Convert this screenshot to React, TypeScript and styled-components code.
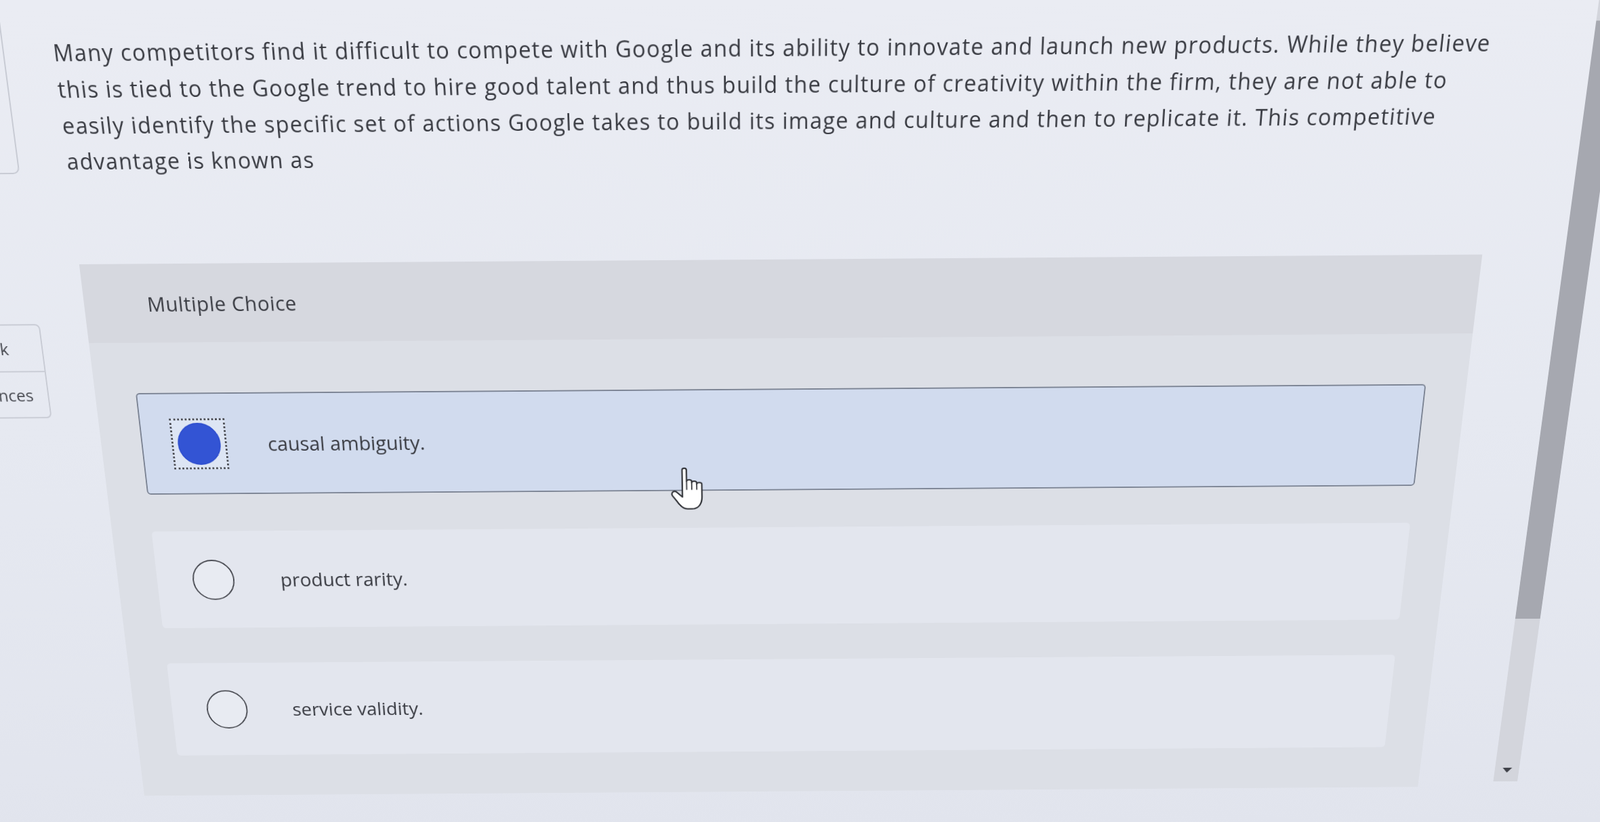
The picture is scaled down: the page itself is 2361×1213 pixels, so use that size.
import React from "react";
import styled, { createGlobalStyle } from "styled-components";

/* The reference is a photo of a screen taken at a slight angle:
   the whole page is laid out flat and then given one projective
   transform (perspective + small tilt) so it matches the photo. */
const G = 0.00012;
const E = 1.065;
const RAIL = 250;
const CX = 1100 + RAIL;

const GlobalStyle = createGlobalStyle`
  html, body {
    margin: 0;
    padding: 0;
    overflow: hidden;
    background: #eaecf3;
  }
  body {
    font-family: "Open Sans", "Liberation Sans", Arial, sans-serif;
    color: #383a41;
  }
`;

const Viewport = styled.div`
  width: 2361px;
  height: 1213px;
  overflow: hidden;
  background: #eaecf3;
`;

const Stage = styled.div`
  display: flex;
  align-items: flex-start;
  width: 2900px;
  height: 1360px;
  margin-left: -${RAIL}px;
  transform-origin: 0 0;
  transform: translate(${CX}px, 600px) rotate(-0.4deg) translate(-${CX}px, -600px)
    matrix3d(1, 0, 0, 0, ${CX * G}, ${E}, 0, ${G}, 0, 0, 1, 0, 0, 0, 0, 1);
  background: linear-gradient(180deg, #eaecf3 0%, #e6e9f1 45%, #e1e4ed 100%);
`;

const Rail = styled.aside`
  flex: 0 0 ${RAIL + 1}px;
  display: flex;
  flex-direction: column;
  align-items: flex-end;
`;

const NumberCard = styled.div`
  box-sizing: border-box;
  margin-top: 10px;
  width: 184px;
  height: 231px;
  border: 2px solid #c8cbd4;
  border-radius: 10px;
`;

const ToolCard = styled.div`
  box-sizing: border-box;
  margin-top: 226px;
  width: 184px;
  border: 2px solid #c8cbd4;
  border-radius: 8px;
  display: flex;
  flex-direction: column;
`;

const ToolItem = styled.div`
  height: 71px;
  display: flex;
  align-items: center;
  justify-content: center;
  font-size: 26px;
  color: #4a4c53;
  & + & {
    border-top: 2px solid #c8cbd4;
  }
`;

const Main = styled.main`
  margin-left: 73px;
  flex: 0 0 2164px;
  display: flex;
  flex-direction: column;
`;

const Question = styled.p`
  margin: 41px 0 0;
  font-size: 33px;
  letter-spacing: 1.35px;
  line-height: 52px;
  color: #383a41;
  white-space: nowrap;
`;

const Panel = styled.section`
  margin-top: 127px;
  background: #dcdfe6;
`;

const PanelHeader = styled.div`
  height: 121px;
  display: flex;
  align-items: center;
  padding-left: 98px;
  background: #d6d8df;
  font-size: 31px;
  letter-spacing: 0.6px;
  color: #3a3c43;
`;

const Choices = styled.div`
  display: flex;
  flex-direction: column;
  gap: 61px;
  padding: 79px 64px 73px;
`;

const Option = styled.label<{ $selected?: boolean }>`
  position: relative;
  box-sizing: border-box;
  height: 164px;
  display: flex;
  align-items: center;
  gap: 65px;
  padding-left: 46px;
  border: 2px solid ${(p) => (p.$selected ? "#7b8393" : "transparent")};
  border-radius: 6px;
  background: ${(p) => (p.$selected ? "#d1dbee" : "#e3e6ee")};
  font-size: 31px;
  color: #3a3c43;
  cursor: pointer;
`;

const RadioFrame = styled.span<{ $focused?: boolean }>`
  box-sizing: border-box;
  flex: 0 0 88px;
  height: 82px;
  display: flex;
  align-items: center;
  justify-content: center;
  border: 3px dotted ${(p) => (p.$focused ? "#4b4d54" : "transparent")};
  background: ${(p) => (p.$focused ? "#dde5f4" : "transparent")};
`;

const RadioDot = styled.span<{ $checked?: boolean }>`
  box-sizing: border-box;
  width: 68px;
  height: 68px;
  border-radius: 50%;
  border: ${(p) => (p.$checked ? "2px solid #2f4fcf" : "2.5px solid #42444b")};
  background: ${(p) => (p.$checked ? "#3354d4" : "#e8ebf2")};
`;

const Pointer = styled.svg`
  position: absolute;
  left: 838px;
  top: 122px;
  width: 58px;
  height: 72px;
  z-index: 2;
`;

const ScrollTrack = styled.div`
  margin-left: 127px;
  flex: 0 0 41px;
  height: 1254px;
  display: flex;
  flex-direction: column;
  background: #d3d5dc;
`;

const ScrollThumb = styled.div`
  margin-top: 37px;
  height: 928px;
  background: #a6a8b0;
`;

const ScrollArrow = styled.div`
  margin-top: auto;
  margin-bottom: 16px;
  align-self: center;
  width: 0;
  height: 0;
  border-left: 8px solid transparent;
  border-right: 8px solid transparent;
  border-top: 9px solid #3f4148;
`;

const HandCursor = () => (
  <Pointer viewBox="0 0 50 62" aria-hidden="true">
    <path
      d="M17 5 C17 1.5 23 1.5 23 5 L23 21 C23 18 30 18 30 21 L30 23 C30 20 37 20 37 23 L37 25 C37 22 44 22 44 25 L44 43 C44 53 39 60 30 60 L24 60 C18 60 14 56 10 50 L3 41 C1 37 5 33 9 36 L17 43 Z"
      fill="#ffffff"
      stroke="#2f3136"
      strokeWidth="2"
      strokeLinejoin="round"
    />
    <path d="M23 21 L23 33 M30 23 L30 33 M37 25 L37 33" stroke="#2f3136" strokeWidth="1.6" fill="none" />
  </Pointer>
);

const choices = [
  { text: "causal ambiguity.", selected: true },
  { text: "product rarity.", selected: false },
  { text: "service validity.", selected: false },
];

export default function App() {
  return (
    <>
      <GlobalStyle />
      <Viewport>
        <Stage>
          <Rail>
            <NumberCard />
            <ToolCard>
              <ToolItem>eBook</ToolItem>
              <ToolItem>References</ToolItem>
            </ToolCard>
          </Rail>
          <Main>
            <Question>
              Many competitors find it difficult to compete with Google and its ability to innovate and launch new products. While they believe
              <br />
              this is tied to the Google trend to hire good talent and thus build the culture of creativity within the firm, they are not able to
              <br />
              easily identify the specific set of actions Google takes to build its image and culture and then to replicate it. This competitive
              <br />
              advantage is known as
            </Question>
            <Panel>
              <PanelHeader>Multiple Choice</PanelHeader>
              <Choices>
                {choices.map((c) => (
                  <Option key={c.text} $selected={c.selected}>
                    <RadioFrame $focused={c.selected}>
                      <RadioDot $checked={c.selected} />
                    </RadioFrame>
                    <span>{c.text}</span>
                    {c.selected && <HandCursor />}
                  </Option>
                ))}
              </Choices>
            </Panel>
          </Main>
          <ScrollTrack>
            <ScrollThumb />
            <ScrollArrow />
          </ScrollTrack>
        </Stage>
      </Viewport>
    </>
  );
}
